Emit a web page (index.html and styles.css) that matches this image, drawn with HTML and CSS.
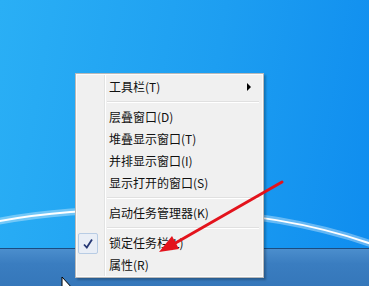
FILE: index.html
```html
<!DOCTYPE html>
<html lang="zh-CN">
<head>
    <meta charset="UTF-8">
    <meta name="viewport" content="width=device-width, initial-scale=1.0">
    <title>任务栏菜单</title>
    <link rel="stylesheet" href="styles.css">
</head>
<body>
    <div class="screen">
        <div class="desktop">
            <svg class="swoosh" width="369" height="248" viewBox="0 0 369 248">
                <path d="M-10 223 C 80 204, 250 199, 380 247" fill="none" stroke="rgba(255,255,255,0.35)" stroke-width="7"/>
                <path d="M-10 223 C 80 204, 250 199, 380 247" fill="none" stroke="#ffffff" stroke-width="2"/>
            </svg>
        </div>
        <div class="taskbar"></div>

        <!-- context menu of the taskbar -->
        <div class="menu">
            <div class="item has-sub">工具栏(T)<span class="sub-arrow"></span></div>
            <div class="sep"></div>
            <div class="item">层叠窗口(D)</div>
            <div class="item">堆叠显示窗口(T)</div>
            <div class="item">并排显示窗口(I)</div>
            <div class="item">显示打开的窗口(S)</div>
            <div class="sep"></div>
            <div class="item">启动任务管理器(K)</div>
            <div class="sep"></div>
            <div class="item checked">
                <span class="check">
                    <svg width="12" height="12" viewBox="0 0 12 12"><path d="M2 6.5 L4.8 9.5 L10 1.5" fill="none" stroke="#263774" stroke-width="1.8"/></svg>
                </span>
                锁定任务栏(L)
            </div>
            <div class="item">属性(R)</div>
        </div>

        <svg class="annotation" width="369" height="286" viewBox="0 0 369 286">
            <line x1="282" y1="182" x2="172" y2="245" stroke="#e3131c" stroke-width="3" stroke-linecap="round"/>
            <polygon points="159,252 179,249 172,236" fill="#e3131c"/>
        </svg>

        <svg class="cursor" width="14" height="22" viewBox="0 0 14 22">
            <path d="M1 1 L1 18 L5 14 L8 21 L10 20 L7 13 L12 13 Z" fill="#ffffff" stroke="#000000" stroke-width="1"/>
        </svg>
    </div>
</body>
</html>
```
FILE: styles.css
```css
* {
    margin: 0;
    padding: 0;
    box-sizing: border-box;
}

body {
    width: 369px;
    height: 286px;
    overflow: hidden;
    font-family: "Noto Sans CJK SC", "Noto Sans", sans-serif;
}

.screen {
    position: relative;
    width: 369px;
    height: 286px;
    display: flex;
    flex-direction: column;
}

.desktop {
    flex: 1;
    background: linear-gradient(100deg, #2aaff5 0%, #1d9ef1 55%, #0f8def 100%);
    overflow: hidden;
}

.swoosh {
    display: block;
    filter: blur(0.6px);
}

.taskbar {
    height: 38px;
    border-top: 1px solid #1b4c80;
    background: linear-gradient(180deg, #4b8ecd 0%, #3a7dc0 40%, #3577ba 100%);
}

.menu {
    position: absolute;
    left: 75px;
    top: 73px;
    width: 189px;
    height: 205px;
    padding: 2px;
    border: 1px solid #b9b9b9;
    background: linear-gradient(to right, #f0f0f0 0 28px, #e2e3e3 28px 29px, #ffffff 29px 30px, #f0f0f0 30px);
    box-shadow: inset 0 0 0 1px #fbfbfb, 2px 2px 2px rgba(0, 0, 0, 0.25);
    font-size: 12px;
    color: #111;
}

.item {
    position: relative;
    height: 22px;
    line-height: 22px;
    padding-left: 31px;
    white-space: nowrap;
}

.sub-arrow {
    position: absolute;
    right: 10px;
    top: 7px;
    width: 0;
    height: 0;
    border-left: 4px solid #000;
    border-top: 4px solid transparent;
    border-bottom: 4px solid transparent;
}

.sep {
    height: 8px;
    margin-left: 29px;
    margin-right: 2px;
    background: linear-gradient(to bottom, transparent 3px, #e0e0e0 3px 4px, #ffffff 4px 5px, transparent 5px);
}

.check {
    position: absolute;
    left: 0;
    top: 1px;
    width: 20px;
    height: 21px;
    display: flex;
    justify-content: center;
    align-items: center;
    border: 1px solid #b8cce4;
    border-radius: 2px;
    background: #e9eef6;
}

.annotation {
    position: absolute;
    left: 0;
    top: 0;
}

.cursor {
    position: absolute;
    left: 61px;
    top: 276px;
}
```
